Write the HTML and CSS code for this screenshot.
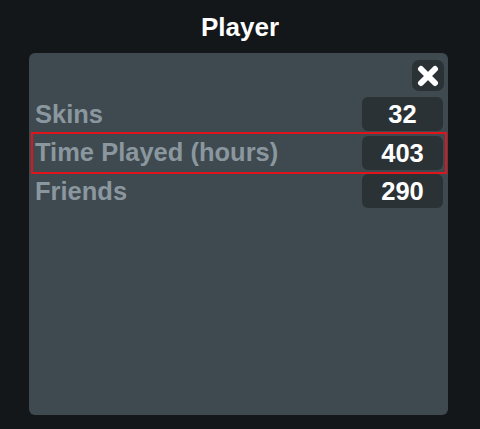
FILE: index.html
```html
<!DOCTYPE html>
<html lang="en">
  <head>
    <meta charset="utf-8">
    <link rel="stylesheet" href="styles.css">
    <title>Player</title>
  </head>
  <body>
    <h1 class="title">Player</h1>

    <div class="panel">
      <div class="panel-top">
        <button class="close" type="button" aria-label="Close">
          <svg width="22" height="22" viewBox="0 0 22 22">
            <path d="M4 4 L18 18 M18 4 L4 18" stroke="#fff" stroke-width="6" stroke-linecap="round" fill="none"/>
          </svg>
        </button>
      </div>

      <div class="stats">
        <div class="stat">
          <span class="stat-name">Skins</span>
          <span class="stat-value">32</span>
        </div>
        <div class="stat selected">
          <span class="stat-name">Time Played (hours)</span>
          <span class="stat-value">403</span>
        </div>
        <div class="stat">
          <span class="stat-name">Friends</span>
          <span class="stat-value">290</span>
        </div>
      </div>
    </div>
  </body>
</html>
```

FILE: styles.css
```css
body {
  margin: 0;
  background-color: #131719;
  font-family: "Liberation Sans", Arial, sans-serif;
  font-weight: bold;
}

.title {
  margin: 0;
  height: 53px;
  line-height: 54px;
  text-align: center;
  color: #ffffff;
  font-size: 26px;
}

.panel {
  margin-left: 29px;
  width: 419px;
  height: 362px;
  background-color: #3e4950;
  border-radius: 6px;
  box-sizing: border-box;
  padding: 7px 5px 0 6px;
}

.panel-top {
  display: flex;
  justify-content: flex-end;
  margin-right: -1px;
}

.close {
  width: 32px;
  height: 31px;
  padding: 0;
  border: none;
  border-radius: 7px;
  background-color: #2b3236;
  display: flex;
  align-items: center;
  justify-content: center;
}

.stats {
  margin-top: 6px;
  display: flex;
  flex-direction: column;
  gap: 4.5px;
}

.stat {
  height: 34px;
  display: flex;
  align-items: center;
  justify-content: space-between;
}

.stat.selected {
  outline: 2px solid #e0141b;
  outline-offset: 2px;
}

.stat-name {
  color: #8b979e;
  font-size: 25.5px;
}

.stat-value {
  width: 81px;
  height: 34px;
  line-height: 35px;
  text-align: center;
  background-color: #2b3236;
  border-radius: 6px;
  color: #ffffff;
  font-size: 25.5px;
}
```
